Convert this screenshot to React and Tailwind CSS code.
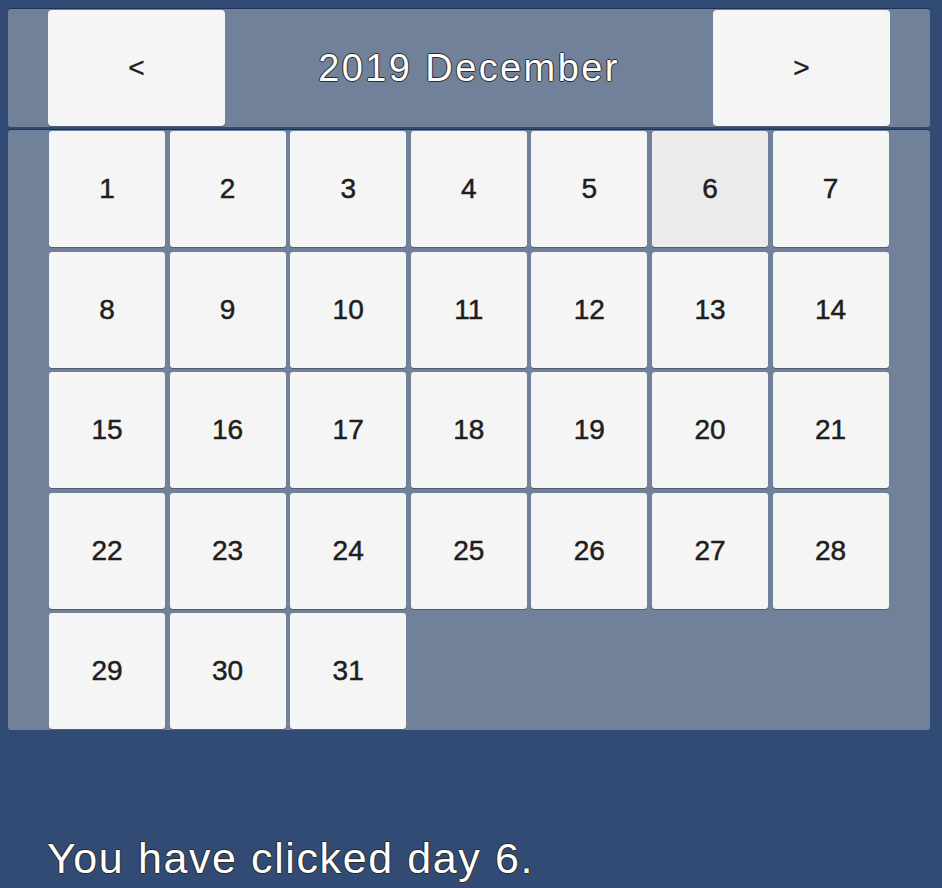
import { useState } from "react";

/* Calendar picker, Unity-style panels */
const outline =
  "[text-shadow:-1px_0_#2a2a2a,1px_0_#2a2a2a,0_-1px_#2a2a2a,0_1px_#2a2a2a]";

function NavButton({ children }) {
  return (
    <button className="w-[177px] h-[116px] bg-[#f5f5f5] rounded-[4px] shadow-[0_1px_0_rgba(20,30,50,0.35)] flex items-center justify-center text-[28px] leading-none text-[#1e1e1e] [-webkit-text-stroke:0.4px_#1e1e1e]">
      {children}
    </button>
  );
}

function DayCell({ day, active, onClick }) {
  return (
    <button
      onClick={onClick}
      className={`h-[116px] rounded-[3px] shadow-[0_1px_0_rgba(20,30,50,0.35)] flex items-center justify-center text-[28px] leading-none text-[#1e1e1e] [-webkit-text-stroke:0.5px_#1e1e1e] ${
        active ? "bg-[#ebebeb]" : "bg-[#f5f5f5]"
      }`}
    >
      {day}
    </button>
  );
}

export default function App() {
  const [picked, setPicked] = useState(6);
  const days = Array.from({ length: 31 }, (_, i) => i + 1);

  return (
    <div className="w-[942px] h-[888px] bg-[#314b75] overflow-hidden font-['Liberation_Sans',Arial,sans-serif] pt-[9px]">
      {/* Header */}
      <div className="ml-[8px] w-[922px] h-[118px] bg-[#718199] rounded-[3px] shadow-[0_-1px_0_#1f3158] flex items-start pt-[1px] px-[40px]">
        <NavButton>&lt;</NavButton>
        <div className="flex-1 h-[116px] flex items-center justify-center">
          <span className={`text-white text-[38px] leading-none tracking-[2.4px] ${outline}`}>
            2019 December
          </span>
        </div>
        <NavButton>&gt;</NavButton>
      </div>

      {/* Days */}
      <div className="mt-[3px] ml-[8px] w-[922px] h-[600px] bg-[#718199] rounded-[3px] shadow-[0_-1px_0_#1f3158] pl-[41px] pt-[1px]">
        <div className="grid grid-cols-[repeat(7,116px)] gap-x-[4.6px] gap-y-[4.5px]">
          {days.map((d) => (
            <DayCell
              key={d}
              day={d}
              active={d === picked}
              onClick={() => setPicked(d)}
            />
          ))}
        </div>
      </div>

      {/* Status */}
      <div className={`mt-[107px] ml-[47px] text-white text-[43px] leading-none tracking-[1.6px] ${outline}`}>
        You have clicked day {picked}.
      </div>
    </div>
  );
}
